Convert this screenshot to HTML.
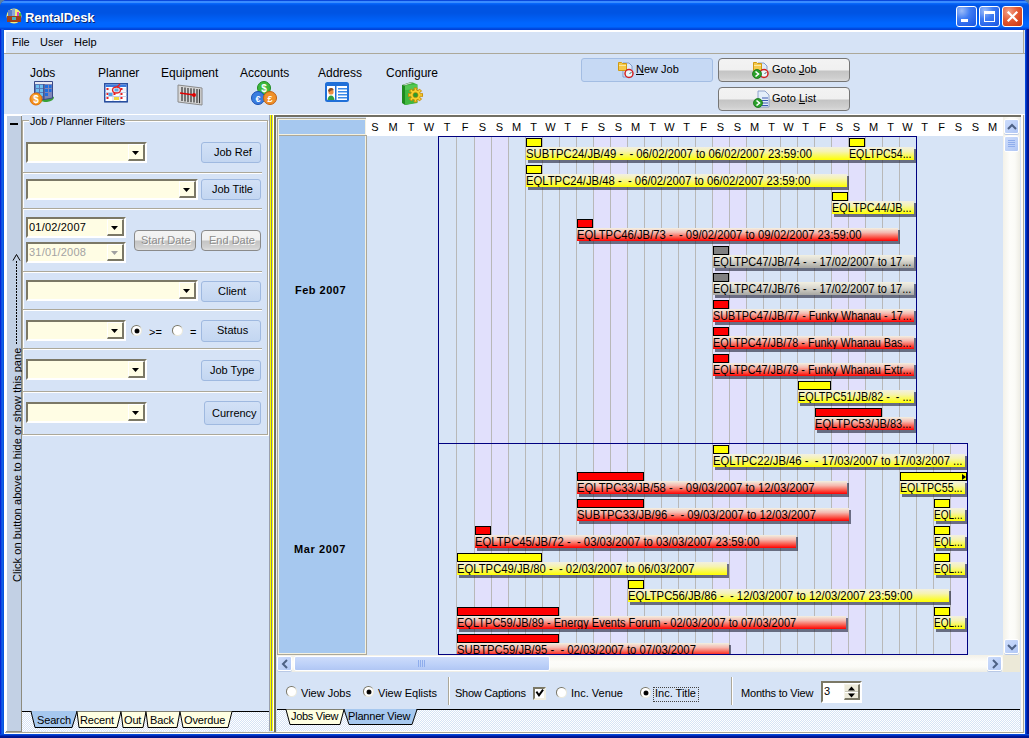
<!DOCTYPE html><html><head><meta charset="utf-8"><style>
*{margin:0;padding:0;box-sizing:border-box}
html,body{width:1029px;height:738px;overflow:hidden;background:#5b7fa0}
body{position:relative;font-family:"Liberation Sans",sans-serif;font-size:11px;color:#000}
.a{position:absolute}
.t{position:absolute;white-space:nowrap}
svg{position:absolute;overflow:visible}
</style></head><body>
<div class="a" style="left:0;top:0;width:1029px;height:738px;background:#0831d9;border-radius:7px 7px 0 0"></div>
<div class="a" style="left:0;top:0;width:1029px;height:30px;border-radius:7px 7px 0 0;background:linear-gradient(180deg,#0a48dc 0px,#0a48dc 1px,#3a8cff 1px,#3a8cff 3px,#0a6cff 3px,#0058ec 5px,#0054e3 6px,#0054e3 13px,#0060f6 20px,#0066ff 23px,#0066ff 27px,#0050e4 28px,#003dd7 30px)"></div>
<div class="a" style="left:0;top:29px;width:4px;height:709px;background:linear-gradient(90deg,#0019cf 0,#0831d9 1px,#166aee 2px,#0855dd 3px,#0855dd 4px)"></div>
<div class="a" style="left:1025px;top:29px;width:4px;height:709px;background:linear-gradient(90deg,#0855dd 0,#003bda 1px,#001ea0 2px,#00138c 3px,#00138c 4px)"></div>
<div class="a" style="left:0;top:734px;width:1029px;height:4px;background:linear-gradient(180deg,#0855dd 0,#003bda 1px,#001ea0 2px,#00138c 3px,#00138c 4px)"></div>
<div class="t" style="left:25px;top:11px;font-size:13px;line-height:13px;font-weight:bold;color:#fff;letter-spacing:-0.15px;text-shadow:1px 1px 0 #0a246a">RentalDesk</div>
<svg style="left:6px;top:8px" width="16" height="16" viewBox="0 0 16 16">
<circle cx="8" cy="8" r="7.5" fill="#f2ee7a"/>
<rect x="2" y="2" width="4" height="7" fill="#5a7fc8"/><rect x="6" y="1" width="3" height="8" fill="#8aa7d8"/>
<rect x="1" y="8" width="14" height="6" fill="#a0401a"/><rect x="6" y="9" width="4" height="3" fill="#4ab0c0"/>
<rect x="11" y="4" width="2" height="4" fill="#e040c0"/><rect x="13" y="5" width="2" height="3" fill="#40c040"/>
</svg>
<div class="a" style="left:956px;top:6px;width:21px;height:21px;border:1px solid #fff;border-radius:3px;background:radial-gradient(circle at 25% 20%,#9cbcf8 0,#3f7cf3 40%,#2663ea 75%,#1b55dc 100%)"></div>
<div class="a" style="left:979px;top:6px;width:21px;height:21px;border:1px solid #fff;border-radius:3px;background:radial-gradient(circle at 25% 20%,#9cbcf8 0,#3f7cf3 40%,#2663ea 75%,#1b55dc 100%)"></div>
<div class="a" style="left:1002px;top:6px;width:21px;height:21px;border:1px solid #fff;border-radius:3px;background:radial-gradient(circle at 30% 25%,#f3a28a 0,#e45a34 45%,#d2401c 80%,#c23a17 100%)"></div>
<div class="a" style="left:961px;top:19px;width:7px;height:3px;background:#fff"></div>
<div class="a" style="left:984px;top:11px;width:11px;height:11px;border:1px solid #fff;border-top-width:3px"></div>
<svg style="left:1002px;top:6px" width="21" height="21" viewBox="0 0 21 21"><path d="M6.5 6.5 L14.5 14.5 M14.5 6.5 L6.5 14.5" stroke="#fff" stroke-width="2.2" stroke-linecap="square"/></svg>
<div class="a" style="left:4px;top:30px;width:1021px;height:704px;background:#d6e3f6"></div>
<div class="a" style="left:4px;top:30px;width:1020px;height:2px;background:#fff"></div>
<div class="a" style="left:4px;top:30px;width:2px;height:23px;background:#fff"></div>
<div class="a" style="left:1023px;top:30px;width:1px;height:24px;background:#aca899"></div>
<div class="a" style="left:4px;top:53px;width:1021px;height:1px;background:#aca899"></div>
<div class="t" style="left:12px;top:37px;font-size:11px;line-height:11px;">File</div>
<div class="t" style="left:40px;top:37px;font-size:11px;line-height:11px;">User</div>
<div class="t" style="left:74px;top:37px;font-size:11px;line-height:11px;">Help</div>
<div class="a" style="left:4px;top:114px;width:1021px;height:1px;background:#fff"></div>
<div class="t" style="left:30px;top:67px;font-size:12px;line-height:12px;color:#000">Jobs</div>
<div class="t" style="left:98px;top:67px;font-size:12px;line-height:12px;color:#000">Planner</div>
<div class="t" style="left:161px;top:67px;font-size:12px;line-height:12px;color:#000">Equipment</div>
<div class="t" style="left:240px;top:67px;font-size:12px;line-height:12px;color:#000">Accounts</div>
<div class="t" style="left:318px;top:67px;font-size:12px;line-height:12px;color:#000">Address</div>
<div class="t" style="left:386px;top:67px;font-size:12px;line-height:12px;color:#000">Configure</div>
<svg style="left:30px;top:80px" width="26" height="26" viewBox="0 0 26 26">
<path d="M10 17 Q18 14 24 17 Q24 21 17 22 Q12 22 10 20 Z" fill="#38a038"/>
<path d="M4.5 1.5 H13.5 L14 2 V19.5 H4.5 Z" fill="#5a7ab8" stroke="#3a4a88" stroke-width="1"/>
<path d="M14 1.5 H22.5 V18 L14 19.5 Z" fill="#7f86b8" stroke="#3a4a88" stroke-width="1"/>
<rect x="5" y="2" width="17" height="2" fill="#e8e8f0"/>
<g fill="#6ec0f0"><rect x="6" y="5" width="3" height="3"/><rect x="10" y="5" width="3" height="3"/><rect x="6" y="9" width="3" height="3"/><rect x="10" y="9" width="3" height="3"/><rect x="6" y="13" width="3" height="3"/><rect x="10" y="13" width="3" height="3"/></g>
<g fill="#1e6ee0"><rect x="15" y="5" width="3" height="3"/><rect x="19" y="5" width="2.5" height="3"/><rect x="15" y="9" width="3" height="3"/><rect x="19" y="9" width="2.5" height="3"/><rect x="15" y="13" width="3" height="3"/></g>
<circle cx="6" cy="19" r="6" fill="#f39018"/><circle cx="6" cy="19" r="6" fill="none" stroke="#e07008" stroke-width="1"/>
<circle cx="5" cy="17.5" r="3.5" fill="#f8b048" opacity=".6"/>
<text x="6" y="23" font-size="10" font-weight="bold" fill="#fff" text-anchor="middle" font-family="Liberation Sans">$</text>
</svg>
<svg style="left:104px;top:83px" width="25" height="20" viewBox="0 0 25 20">
<rect x="0.75" y="0.75" width="22.5" height="18" fill="#fff" stroke="#2a50a0" stroke-width="1.5"/>
<rect x="1.5" y="1.5" width="21" height="2.5" fill="#3a7ae0"/>
<g fill="#ecf0f8"><rect x="2.5" y="5" width="6" height="3.5"/><rect x="9.5" y="5" width="6" height="3.5"/><rect x="16.5" y="5" width="5.5" height="3.5"/></g>
<g fill="#c8d0e8"><rect x="1.5" y="9" width="21" height="1"/><rect x="1.5" y="13" width="21" height="1"/><rect x="8.5" y="4" width="1" height="14"/><rect x="15.5" y="4" width="1" height="14"/></g>
<g fill="#e82020"><rect x="2.5" y="5" width="2" height="2"/><rect x="2.5" y="10" width="2" height="2"/><rect x="2.5" y="14" width="2" height="2"/><rect x="16.5" y="5" width="2" height="2"/><rect x="16.5" y="10" width="2" height="2"/><rect x="16.5" y="14" width="2" height="2"/><rect x="9.5" y="10" width="2" height="2"/></g>
<rect x="4.5" y="10" width="4" height="3" fill="#50a0e8"/><rect x="10" y="14" width="5" height="3" fill="#f0d840"/><rect x="10.5" y="5.5" width="4" height="3" fill="#60a8e8"/>
<ellipse cx="12.5" cy="7" rx="4" ry="3" fill="none" stroke="#e82020" stroke-width="1.3"/><path d="M13 4 L16 1" stroke="#e82020" stroke-width="1.2"/>
<rect x="0.75" y="18.2" width="22.5" height="1" fill="#2a50a0"/>
</svg>
<svg style="left:177px;top:82px" width="26" height="24" viewBox="0 0 26 24">
<path d="M1 3 L25 6 L25 23 L1 20 Z" fill="#d8d8d8" stroke="#8a8a8a"/>
<g stroke="#333" stroke-width="1.2"><path d="M5 5 V19 M8 5.5 V19.5 M11 6 V20 M14 6.3 V20.3 M17 6.6 V20.6 M20 7 V21 M22.5 7.3 V21.3"/></g>
<path d="M3 11 L17 13" stroke="#e00000" stroke-width="1.3"/><circle cx="17" cy="13" r="2" fill="#e00000"/>
</svg>
<svg style="left:251px;top:81px" width="26" height="25" viewBox="0 0 26 25">
<circle cx="13" cy="7" r="6.5" fill="#3db83d" stroke="#208a20"/>
<circle cx="7" cy="17" r="6.5" fill="#3a7de0" stroke="#1a50b0"/>
<circle cx="19" cy="17" r="6.5" fill="#f0902a" stroke="#c06010"/>
<text x="13" y="11" font-size="10" font-weight="bold" fill="#fff" text-anchor="middle" font-family="Liberation Sans">$</text>
<text x="7" y="21" font-size="9" font-weight="bold" fill="#fff" text-anchor="middle" font-family="Liberation Sans">€</text>
<text x="19" y="21" font-size="9" font-weight="bold" fill="#fff" text-anchor="middle" font-family="Liberation Sans">£</text>
</svg>
<svg style="left:325px;top:82px" width="25" height="20" viewBox="0 0 25 20">
<rect x="1" y="1" width="22" height="18" rx="1.5" fill="#fff" stroke="#1f6fd8" stroke-width="2"/>
<rect x="1" y="1" width="22" height="3" fill="#1f6fd8"/>
<rect x="10" y="4" width="1.5" height="14" fill="#1f6fd8"/>
<circle cx="6" cy="10" r="2.6" fill="#f09040"/><path d="M3 9 Q3.5 5.5 6.5 6 Q9 6.5 8.5 8.5 Q6 7.5 4.5 10 Z" fill="#8a4a20"/>
<path d="M2.5 18 Q3 13.5 6 13.5 Q9 13.5 9.5 18 Z" fill="#30a040"/>
<g fill="#3a8ae8"><rect x="13" y="6" width="9" height="1.5"/><rect x="13" y="9" width="9" height="1.5"/><rect x="13" y="12" width="9" height="1.5"/><rect x="13" y="15" width="9" height="1.5"/></g>
</svg>
<svg style="left:401px;top:81px" width="24" height="25" viewBox="0 0 24 25">
<path d="M1 4 L10 1 L13 2 L13 22 L4 24 L1 22 Z" fill="#1e8a1e"/>
<path d="M1.5 4 L10 1.2 L12.5 2 L4 4.5 Z" fill="#c8d0c8"/>
<path d="M4 4.5 L13 2 L16.5 3.5 L16.5 22 L4 24 Z" fill="#40b840"/>
<path d="M4 4.5 L16.5 3.5 L16.5 8 L4 9 Z" fill="#60d060" opacity=".6"/>
<g transform="translate(14.5,14)"><path d="M7.03 -1.57 L7.03 1.57 L4.89 1.06 L4.20 2.71 L6.08 3.86 L3.86 6.08 L2.71 4.20 L1.06 4.89 L1.57 7.03 L-1.57 7.03 L-1.06 4.89 L-2.71 4.20 L-3.86 6.08 L-6.08 3.86 L-4.20 2.71 L-4.89 1.06 L-7.03 1.57 L-7.03 -1.57 L-4.89 -1.06 L-4.20 -2.71 L-6.08 -3.86 L-3.86 -6.08 L-2.71 -4.20 L-1.06 -4.89 L-1.57 -7.03 L1.57 -7.03 L1.06 -4.89 L2.71 -4.20 L3.86 -6.08 L6.08 -3.86 L4.20 -2.71 L4.89 -1.06 Z" fill="#f8d030" stroke="#c88a00" stroke-width="0.9"/><circle r="2.6" fill="#2e9a2e" stroke="#c88a00" stroke-width="0.6"/></g>
</svg>
<div class="a" style="left:581px;top:58px;width:132px;height:24px;border:1px solid #a3bde3;border-radius:3px;background:#c6d9f4"></div>
<svg style="left:617px;top:61px" width="18" height="18" viewBox="0 0 18 18"><path d="M6 2 H12 L15 5 V16 H6 Z" fill="#dfeaf8" stroke="#6a8ac0" stroke-width="0.8"/><path d="M1.5 1.5 H4.5 L5.5 2.5 H9.5 V9.5 H1.5 Z" fill="#f6c84a" stroke="#d09a10" stroke-width="1"/><rect x="2" y="4" width="7" height="1" fill="#fbe9a0"/><circle cx="12" cy="12.5" r="4" fill="#e8f8fc" stroke="#d42020" stroke-width="1.5"/><path d="M12.5 13 L14.5 11" stroke="#555" stroke-width="1"/></svg>
<div class="t" style="left:636px;top:64px;font-size:11px;line-height:11px;"><u>N</u>ew Job</div>
<div class="a" style="left:718px;top:58px;width:132px;height:24px;border:1px solid #767676;border-radius:4px;background:linear-gradient(180deg,#f3f3f3 0,#f0f0f0 11px,#c4c4c4 12px,#cfcfcf 19px,#dedede 23px)"></div>
<svg style="left:752px;top:61px" width="18" height="18" viewBox="0 0 18 18"><path d="M6 2 H12 L15 5 V16 H6 Z" fill="#dfeaf8" stroke="#6a8ac0" stroke-width="0.8"/><path d="M1.5 1.5 H4.5 L5.5 2.5 H9.5 V9.5 H1.5 Z" fill="#f6c84a" stroke="#d09a10" stroke-width="1"/><rect x="2" y="4" width="7" height="1" fill="#fbe9a0"/><circle cx="12" cy="12.5" r="4" fill="#e8f8fc" stroke="#d42020" stroke-width="1.5"/><path d="M12.5 13 L14.5 11" stroke="#555" stroke-width="1"/><circle cx="5" cy="13" r="4.5" fill="#2aa02a" stroke="#167016" stroke-width="0.8"/><path d="M3.5 10.5 L6.5 13 L3.5 15.5" stroke="#fff" stroke-width="1.6" fill="none"/></svg>
<div class="t" style="left:772px;top:64px;font-size:11px;line-height:11px;">Goto <u>J</u>ob</div>
<div class="a" style="left:718px;top:87px;width:132px;height:24px;border:1px solid #767676;border-radius:4px;background:linear-gradient(180deg,#f3f3f3 0,#f0f0f0 11px,#c4c4c4 12px,#cfcfcf 19px,#dedede 23px)"></div>
<svg style="left:753px;top:90px" width="18" height="18" viewBox="0 0 18 18">
<path d="M5 1 H12 L16 5 V17 H5 Z" fill="#e4eefa" stroke="#7a90c0" stroke-width="0.8"/>
<g stroke="#3a58b0" stroke-width="1"><path d="M9 8 H15 M9 10.5 H15 M9 13 H15 M9 15.5 H15"/></g>
<circle cx="5" cy="13" r="4.5" fill="#2aa02a" stroke="#167016" stroke-width="0.8"/><path d="M3.5 10.5 L6.5 13 L3.5 15.5" stroke="#fff" stroke-width="1.6" fill="none"/></svg>
<div class="t" style="left:772px;top:93px;font-size:11px;line-height:11px;">Goto <u>L</u>ist</div>
<div class="a" style="left:4px;top:114px;width:3px;height:620px;background:#fff"></div>
<div class="a" style="left:4px;top:114px;width:270px;height:1px;background:#fff"></div>
<div class="a" style="left:4px;top:115px;width:18px;height:1px;background:#fff"></div>
<div class="a" style="left:7px;top:116px;width:14px;height:616px;background:#c2d0e4"></div>
<div class="a" style="left:21px;top:116px;width:1px;height:616px;background:#8d8b7e"></div>
<div class="a" style="left:10px;top:123px;width:8px;height:2px;background:#000"></div>
<div class="t" style="left:12px;top:582px;font-size:11px;line-height:11px;letter-spacing:0.07px;transform-origin:0 0;transform:rotate(-90deg)">Click on button above to hide or show this pane</div>
<svg style="left:0;top:250px" width="22" height="100" viewBox="0 0 22 100"><path d="M16.5 94 V10" stroke="#000" stroke-width="1" stroke-dasharray="2 1"/><path d="M13 10.5 L16.5 4.5 L20 10.5" stroke="#000" stroke-width="1" fill="none"/></svg>
<div class="a" style="left:22px;top:120px;width:246px;height:315px;border:1px solid #aca899;box-shadow:inset 1px 1px 0 #fff, 1px 1px 0 #fff"></div>
<div class="a" style="left:29px;top:115px;width:96px;height:11px;background:#d6e3f6"></div>
<div class="t" style="left:30px;top:116px;font-size:10.7px;line-height:10.7px;">Job / Planner Filters</div>
<div class="a" style="left:26px;top:142px;width:121px;height:21px;background:#fffde4;border-top:2px solid #7b7866;border-left:2px solid #7b7866;border-right:2px solid #fff;border-bottom:2px solid #fff"></div>
<div class="a" style="left:128px;top:144px;width:17px;height:17px;background:#fffde4;border-top:1px solid #fff;border-left:1px solid #fff;border-right:2px solid #7b7866;border-bottom:2px solid #7b7866"></div>
<svg style="left:132px;top:151px" width="8" height="5" viewBox="0 0 8 5"><path d="M0 0 H7 L3.5 4 Z" fill="#000"/></svg>
<div class="a" style="left:201px;top:142px;width:60px;height:21px;border:1px solid #9fb9e0;border-radius:3px;background:linear-gradient(180deg,#d2e1f6,#c3d6f1)"></div>
<div class="t" style="left:214px;top:147px;font-size:11px;line-height:11px;">Job Ref</div>
<div class="a" style="left:23px;top:172px;width:239px;height:1px;background:#aca899"></div>
<div class="a" style="left:23px;top:173px;width:239px;height:1px;background:#fff"></div>
<div class="a" style="left:26px;top:179px;width:172px;height:21px;background:#fffde4;border-top:2px solid #7b7866;border-left:2px solid #7b7866;border-right:2px solid #fff;border-bottom:2px solid #fff"></div>
<div class="a" style="left:179px;top:181px;width:17px;height:17px;background:#fffde4;border-top:1px solid #fff;border-left:1px solid #fff;border-right:2px solid #7b7866;border-bottom:2px solid #7b7866"></div>
<svg style="left:183px;top:188px" width="8" height="5" viewBox="0 0 8 5"><path d="M0 0 H7 L3.5 4 Z" fill="#000"/></svg>
<div class="a" style="left:201px;top:179px;width:60px;height:21px;border:1px solid #9fb9e0;border-radius:3px;background:linear-gradient(180deg,#d2e1f6,#c3d6f1)"></div>
<div class="t" style="left:212px;top:184px;font-size:11px;line-height:11px;">Job Title</div>
<div class="a" style="left:23px;top:208px;width:239px;height:1px;background:#aca899"></div>
<div class="a" style="left:23px;top:209px;width:239px;height:1px;background:#fff"></div>
<div class="a" style="left:26px;top:217px;width:100px;height:21px;background:#fffde4;border-top:2px solid #7b7866;border-left:2px solid #7b7866;border-right:2px solid #fff;border-bottom:2px solid #fff"></div>
<div class="a" style="left:107px;top:219px;width:17px;height:17px;background:#fffde4;border-top:1px solid #fff;border-left:1px solid #fff;border-right:2px solid #7b7866;border-bottom:2px solid #7b7866"></div>
<svg style="left:111px;top:226px" width="8" height="5" viewBox="0 0 8 5"><path d="M0 0 H7 L3.5 4 Z" fill="#000"/></svg>
<div class="t" style="left:29px;top:222px;font-size:11px;line-height:11px;color:#000;letter-spacing:0.2px">01/02/2007</div>
<div class="a" style="left:26px;top:242px;width:100px;height:21px;background:#fffde4;border-top:2px solid #7b7866;border-left:2px solid #7b7866;border-right:2px solid #fff;border-bottom:2px solid #fff"></div>
<div class="a" style="left:107px;top:244px;width:17px;height:17px;background:#fffde4;border-top:1px solid #fff;border-left:1px solid #fff;border-right:2px solid #7b7866;border-bottom:2px solid #7b7866"></div>
<svg style="left:111px;top:251px" width="8" height="5" viewBox="0 0 8 5"><path d="M0 0 H7 L3.5 4 Z" fill="#a0a0a0"/></svg>
<div class="t" style="left:29px;top:247px;font-size:11px;line-height:11px;color:#a3a3a3;letter-spacing:0.2px">31/01/2008</div>
<div class="a" style="left:134px;top:230px;width:62px;height:21px;border:1px solid #8a8a8a;border-radius:4px;background:linear-gradient(180deg,#f3f3f3 0,#f0f0f0 9px,#c4c4c4 10px,#d0d0d0 16px,#dedede 19px)"></div>
<div class="t" style="left:141px;top:235px;font-size:11px;line-height:11px;color:#8d8d8d;text-shadow:1px 1px 0 #fff">Start Date</div>
<div class="a" style="left:201px;top:230px;width:60px;height:21px;border:1px solid #8a8a8a;border-radius:4px;background:linear-gradient(180deg,#f3f3f3 0,#f0f0f0 9px,#c4c4c4 10px,#d0d0d0 16px,#dedede 19px)"></div>
<div class="t" style="left:209px;top:235px;font-size:11px;line-height:11px;color:#8d8d8d;text-shadow:1px 1px 0 #fff">End Date</div>
<div class="a" style="left:23px;top:271px;width:239px;height:1px;background:#aca899"></div>
<div class="a" style="left:23px;top:272px;width:239px;height:1px;background:#fff"></div>
<div class="a" style="left:26px;top:280px;width:172px;height:21px;background:#fffde4;border-top:2px solid #7b7866;border-left:2px solid #7b7866;border-right:2px solid #fff;border-bottom:2px solid #fff"></div>
<div class="a" style="left:179px;top:282px;width:17px;height:17px;background:#fffde4;border-top:1px solid #fff;border-left:1px solid #fff;border-right:2px solid #7b7866;border-bottom:2px solid #7b7866"></div>
<svg style="left:183px;top:289px" width="8" height="5" viewBox="0 0 8 5"><path d="M0 0 H7 L3.5 4 Z" fill="#000"/></svg>
<div class="a" style="left:201px;top:281px;width:60px;height:21px;border:1px solid #9fb9e0;border-radius:3px;background:linear-gradient(180deg,#d2e1f6,#c3d6f1)"></div>
<div class="t" style="left:218px;top:286px;font-size:11px;line-height:11px;">Client</div>
<div class="a" style="left:23px;top:309px;width:239px;height:1px;background:#aca899"></div>
<div class="a" style="left:23px;top:310px;width:239px;height:1px;background:#fff"></div>
<div class="a" style="left:26px;top:320px;width:100px;height:21px;background:#fffde4;border-top:2px solid #7b7866;border-left:2px solid #7b7866;border-right:2px solid #fff;border-bottom:2px solid #fff"></div>
<div class="a" style="left:107px;top:322px;width:17px;height:17px;background:#fffde4;border-top:1px solid #fff;border-left:1px solid #fff;border-right:2px solid #7b7866;border-bottom:2px solid #7b7866"></div>
<svg style="left:111px;top:329px" width="8" height="5" viewBox="0 0 8 5"><path d="M0 0 H7 L3.5 4 Z" fill="#000"/></svg>
<div class="a" style="left:131px;top:325px;width:11px;height:11px;border-radius:50%;background:linear-gradient(135deg,#6f6c5c 0,#7a7766 38%,#e8e6d8 62%,#f4f2e6 100%)"></div>
<div class="a" style="left:132.25px;top:326.25px;width:8.5px;height:8.5px;border-radius:50%;background:#fff"></div>
<div class="a" style="left:134.5px;top:328.5px;width:4px;height:4px;border-radius:50%;background:#000;box-shadow:0 0 0 .5px #222"></div>
<div class="t" style="left:149px;top:327px;font-size:11px;line-height:11px;">&gt;=</div>
<div class="a" style="left:172px;top:325px;width:11px;height:11px;border-radius:50%;background:linear-gradient(135deg,#6f6c5c 0,#7a7766 38%,#e8e6d8 62%,#f4f2e6 100%)"></div>
<div class="a" style="left:173.25px;top:326.25px;width:8.5px;height:8.5px;border-radius:50%;background:#fff"></div>
<div class="t" style="left:190px;top:327px;font-size:11px;line-height:11px;">=</div>
<div class="a" style="left:201px;top:320px;width:60px;height:22px;border:1px solid #9fb9e0;border-radius:3px;background:linear-gradient(180deg,#d2e1f6,#c3d6f1)"></div>
<div class="t" style="left:217px;top:325px;font-size:11px;line-height:11px;">Status</div>
<div class="a" style="left:23px;top:348px;width:239px;height:1px;background:#aca899"></div>
<div class="a" style="left:23px;top:349px;width:239px;height:1px;background:#fff"></div>
<div class="a" style="left:26px;top:359px;width:121px;height:21px;background:#fffde4;border-top:2px solid #7b7866;border-left:2px solid #7b7866;border-right:2px solid #fff;border-bottom:2px solid #fff"></div>
<div class="a" style="left:128px;top:361px;width:17px;height:17px;background:#fffde4;border-top:1px solid #fff;border-left:1px solid #fff;border-right:2px solid #7b7866;border-bottom:2px solid #7b7866"></div>
<svg style="left:132px;top:368px" width="8" height="5" viewBox="0 0 8 5"><path d="M0 0 H7 L3.5 4 Z" fill="#000"/></svg>
<div class="a" style="left:201px;top:360px;width:60px;height:21px;border:1px solid #9fb9e0;border-radius:3px;background:linear-gradient(180deg,#d2e1f6,#c3d6f1)"></div>
<div class="t" style="left:210px;top:365px;font-size:11px;line-height:11px;">Job Type</div>
<div class="a" style="left:23px;top:391px;width:239px;height:1px;background:#aca899"></div>
<div class="a" style="left:23px;top:392px;width:239px;height:1px;background:#fff"></div>
<div class="a" style="left:26px;top:402px;width:121px;height:21px;background:#fffde4;border-top:2px solid #7b7866;border-left:2px solid #7b7866;border-right:2px solid #fff;border-bottom:2px solid #fff"></div>
<div class="a" style="left:128px;top:404px;width:17px;height:17px;background:#fffde4;border-top:1px solid #fff;border-left:1px solid #fff;border-right:2px solid #7b7866;border-bottom:2px solid #7b7866"></div>
<svg style="left:132px;top:411px" width="8" height="5" viewBox="0 0 8 5"><path d="M0 0 H7 L3.5 4 Z" fill="#000"/></svg>
<div class="a" style="left:204px;top:401px;width:57px;height:24px;border:1px solid #9fb9e0;border-radius:3px;background:linear-gradient(180deg,#d2e1f6,#c3d6f1)"></div>
<div class="t" style="left:212px;top:408px;font-size:11px;line-height:11px;">Currency</div>
<div class="a" style="left:22px;top:711px;width:247px;height:21px;background:repeating-linear-gradient(45deg,#e3eaf5 0,#e3eaf5 1px,#f3f6fb 1px,#f3f6fb 2px)"></div>
<div class="a" style="left:22px;top:711px;width:247px;height:1px;background:#000"></div>
<div class="a" style="left:274px;top:115px;width:749px;height:2px;background:#716f64"></div>
<div class="a" style="left:274px;top:115px;width:2px;height:619px;background:#716f64"></div>
<div class="a" style="left:276px;top:117px;width:749px;height:1px;background:#e8eef8"></div>
<div class="a" style="left:276px;top:117px;width:1px;height:540px;background:#e8eef8"></div>
<div class="a" style="left:277px;top:117px;width:748px;height:540px;background:#d7e4f6"></div>
<div class="a" style="left:366px;top:117px;width:638px;height:19px;background:#fff"></div>
<div class="t" style="left:366px;width:18px;text-align:center;top:122px;font-size:11px;line-height:11px">S</div>
<div class="t" style="left:384px;width:18px;text-align:center;top:122px;font-size:11px;line-height:11px">M</div>
<div class="t" style="left:402px;width:18px;text-align:center;top:122px;font-size:11px;line-height:11px">T</div>
<div class="t" style="left:420px;width:18px;text-align:center;top:122px;font-size:11px;line-height:11px">W</div>
<div class="t" style="left:438px;width:18px;text-align:center;top:122px;font-size:11px;line-height:11px">T</div>
<div class="t" style="left:456px;width:18px;text-align:center;top:122px;font-size:11px;line-height:11px">F</div>
<div class="t" style="left:474px;width:17px;text-align:center;top:122px;font-size:11px;line-height:11px">S</div>
<div class="t" style="left:491px;width:17px;text-align:center;top:122px;font-size:11px;line-height:11px">S</div>
<div class="t" style="left:508px;width:17px;text-align:center;top:122px;font-size:11px;line-height:11px">M</div>
<div class="t" style="left:525px;width:17px;text-align:center;top:122px;font-size:11px;line-height:11px">T</div>
<div class="t" style="left:542px;width:17px;text-align:center;top:122px;font-size:11px;line-height:11px">W</div>
<div class="t" style="left:559px;width:17px;text-align:center;top:122px;font-size:11px;line-height:11px">T</div>
<div class="t" style="left:576px;width:17px;text-align:center;top:122px;font-size:11px;line-height:11px">F</div>
<div class="t" style="left:593px;width:17px;text-align:center;top:122px;font-size:11px;line-height:11px">S</div>
<div class="t" style="left:610px;width:17px;text-align:center;top:122px;font-size:11px;line-height:11px">S</div>
<div class="t" style="left:627px;width:17px;text-align:center;top:122px;font-size:11px;line-height:11px">M</div>
<div class="t" style="left:644px;width:17px;text-align:center;top:122px;font-size:11px;line-height:11px">T</div>
<div class="t" style="left:661px;width:17px;text-align:center;top:122px;font-size:11px;line-height:11px">W</div>
<div class="t" style="left:678px;width:17px;text-align:center;top:122px;font-size:11px;line-height:11px">T</div>
<div class="t" style="left:695px;width:17px;text-align:center;top:122px;font-size:11px;line-height:11px">F</div>
<div class="t" style="left:712px;width:17px;text-align:center;top:122px;font-size:11px;line-height:11px">S</div>
<div class="t" style="left:729px;width:17px;text-align:center;top:122px;font-size:11px;line-height:11px">S</div>
<div class="t" style="left:746px;width:17px;text-align:center;top:122px;font-size:11px;line-height:11px">M</div>
<div class="t" style="left:763px;width:17px;text-align:center;top:122px;font-size:11px;line-height:11px">T</div>
<div class="t" style="left:780px;width:17px;text-align:center;top:122px;font-size:11px;line-height:11px">W</div>
<div class="t" style="left:797px;width:17px;text-align:center;top:122px;font-size:11px;line-height:11px">T</div>
<div class="t" style="left:814px;width:17px;text-align:center;top:122px;font-size:11px;line-height:11px">F</div>
<div class="t" style="left:831px;width:17px;text-align:center;top:122px;font-size:11px;line-height:11px">S</div>
<div class="t" style="left:848px;width:17px;text-align:center;top:122px;font-size:11px;line-height:11px">S</div>
<div class="t" style="left:865px;width:17px;text-align:center;top:122px;font-size:11px;line-height:11px">M</div>
<div class="t" style="left:882px;width:17px;text-align:center;top:122px;font-size:11px;line-height:11px">T</div>
<div class="t" style="left:899px;width:17px;text-align:center;top:122px;font-size:11px;line-height:11px">W</div>
<div class="t" style="left:916px;width:17px;text-align:center;top:122px;font-size:11px;line-height:11px">T</div>
<div class="t" style="left:933px;width:17px;text-align:center;top:122px;font-size:11px;line-height:11px">F</div>
<div class="t" style="left:950px;width:17px;text-align:center;top:122px;font-size:11px;line-height:11px">S</div>
<div class="t" style="left:967px;width:17px;text-align:center;top:122px;font-size:11px;line-height:11px">S</div>
<div class="t" style="left:984px;width:17px;text-align:center;top:122px;font-size:11px;line-height:11px">M</div>
<div class="a" style="left:277px;top:118px;width:90px;height:537px;background:#aca899"></div>
<div class="a" style="left:278px;top:119px;width:88px;height:535px;background:#f4f1e0"></div>
<div class="a" style="left:279px;top:120px;width:86px;height:533px;background:#a6c8ef"></div>
<div class="a" style="left:279px;top:134px;width:86px;height:1px;background:#f4f1e0"></div>
<div class="a" style="left:279px;top:135px;width:87px;height:1px;background:#aca899"></div>
<div class="a" style="left:366px;top:117px;width:1px;height:18px;background:#fff"></div>
<div class="t" style="left:295px;top:285px;font-size:11px;line-height:11px;font-weight:bold;letter-spacing:0.5px">Feb 2007</div>
<div class="t" style="left:294px;top:544px;font-size:11px;line-height:11px;font-weight:bold;letter-spacing:0.6px">Mar 2007</div>
<div class="a" style="left:438px;top:136px;width:478px;height:307px;background:#d7e4f6"></div>
<div class="a" style="left:474px;top:136px;width:17px;height:307px;background:#e1e0fc"></div>
<div class="a" style="left:491px;top:136px;width:17px;height:307px;background:#e1e0fc"></div>
<div class="a" style="left:593px;top:136px;width:17px;height:307px;background:#e1e0fc"></div>
<div class="a" style="left:610px;top:136px;width:17px;height:307px;background:#e1e0fc"></div>
<div class="a" style="left:712px;top:136px;width:17px;height:307px;background:#e1e0fc"></div>
<div class="a" style="left:729px;top:136px;width:17px;height:307px;background:#e1e0fc"></div>
<div class="a" style="left:831px;top:136px;width:17px;height:307px;background:#e1e0fc"></div>
<div class="a" style="left:848px;top:136px;width:17px;height:307px;background:#e1e0fc"></div>
<div class="a" style="left:456px;top:136px;width:1px;height:307px;background:#b8b8b8"></div>
<div class="a" style="left:474px;top:136px;width:1px;height:307px;background:#b8b8b8"></div>
<div class="a" style="left:491px;top:136px;width:1px;height:307px;background:#b8b8b8"></div>
<div class="a" style="left:508px;top:136px;width:1px;height:307px;background:#b8b8b8"></div>
<div class="a" style="left:525px;top:136px;width:1px;height:307px;background:#b8b8b8"></div>
<div class="a" style="left:542px;top:136px;width:1px;height:307px;background:#b8b8b8"></div>
<div class="a" style="left:559px;top:136px;width:1px;height:307px;background:#b8b8b8"></div>
<div class="a" style="left:576px;top:136px;width:1px;height:307px;background:#b8b8b8"></div>
<div class="a" style="left:593px;top:136px;width:1px;height:307px;background:#b8b8b8"></div>
<div class="a" style="left:610px;top:136px;width:1px;height:307px;background:#b8b8b8"></div>
<div class="a" style="left:627px;top:136px;width:1px;height:307px;background:#b8b8b8"></div>
<div class="a" style="left:644px;top:136px;width:1px;height:307px;background:#b8b8b8"></div>
<div class="a" style="left:661px;top:136px;width:1px;height:307px;background:#b8b8b8"></div>
<div class="a" style="left:678px;top:136px;width:1px;height:307px;background:#b8b8b8"></div>
<div class="a" style="left:695px;top:136px;width:1px;height:307px;background:#b8b8b8"></div>
<div class="a" style="left:712px;top:136px;width:1px;height:307px;background:#b8b8b8"></div>
<div class="a" style="left:729px;top:136px;width:1px;height:307px;background:#b8b8b8"></div>
<div class="a" style="left:746px;top:136px;width:1px;height:307px;background:#b8b8b8"></div>
<div class="a" style="left:763px;top:136px;width:1px;height:307px;background:#b8b8b8"></div>
<div class="a" style="left:780px;top:136px;width:1px;height:307px;background:#b8b8b8"></div>
<div class="a" style="left:797px;top:136px;width:1px;height:307px;background:#b8b8b8"></div>
<div class="a" style="left:814px;top:136px;width:1px;height:307px;background:#b8b8b8"></div>
<div class="a" style="left:831px;top:136px;width:1px;height:307px;background:#b8b8b8"></div>
<div class="a" style="left:848px;top:136px;width:1px;height:307px;background:#b8b8b8"></div>
<div class="a" style="left:865px;top:136px;width:1px;height:307px;background:#b8b8b8"></div>
<div class="a" style="left:882px;top:136px;width:1px;height:307px;background:#b8b8b8"></div>
<div class="a" style="left:899px;top:136px;width:1px;height:307px;background:#b8b8b8"></div>
<div class="a" style="left:438px;top:443px;width:529px;height:212px;background:#d7e4f6"></div>
<div class="a" style="left:474px;top:443px;width:17px;height:212px;background:#e1e0fc"></div>
<div class="a" style="left:491px;top:443px;width:17px;height:212px;background:#e1e0fc"></div>
<div class="a" style="left:593px;top:443px;width:17px;height:212px;background:#e1e0fc"></div>
<div class="a" style="left:610px;top:443px;width:17px;height:212px;background:#e1e0fc"></div>
<div class="a" style="left:712px;top:443px;width:17px;height:212px;background:#e1e0fc"></div>
<div class="a" style="left:729px;top:443px;width:17px;height:212px;background:#e1e0fc"></div>
<div class="a" style="left:831px;top:443px;width:17px;height:212px;background:#e1e0fc"></div>
<div class="a" style="left:848px;top:443px;width:17px;height:212px;background:#e1e0fc"></div>
<div class="a" style="left:950px;top:443px;width:17px;height:212px;background:#e1e0fc"></div>
<div class="a" style="left:456px;top:443px;width:1px;height:212px;background:#b8b8b8"></div>
<div class="a" style="left:474px;top:443px;width:1px;height:212px;background:#b8b8b8"></div>
<div class="a" style="left:491px;top:443px;width:1px;height:212px;background:#b8b8b8"></div>
<div class="a" style="left:508px;top:443px;width:1px;height:212px;background:#b8b8b8"></div>
<div class="a" style="left:525px;top:443px;width:1px;height:212px;background:#b8b8b8"></div>
<div class="a" style="left:542px;top:443px;width:1px;height:212px;background:#b8b8b8"></div>
<div class="a" style="left:559px;top:443px;width:1px;height:212px;background:#b8b8b8"></div>
<div class="a" style="left:576px;top:443px;width:1px;height:212px;background:#b8b8b8"></div>
<div class="a" style="left:593px;top:443px;width:1px;height:212px;background:#b8b8b8"></div>
<div class="a" style="left:610px;top:443px;width:1px;height:212px;background:#b8b8b8"></div>
<div class="a" style="left:627px;top:443px;width:1px;height:212px;background:#b8b8b8"></div>
<div class="a" style="left:644px;top:443px;width:1px;height:212px;background:#b8b8b8"></div>
<div class="a" style="left:661px;top:443px;width:1px;height:212px;background:#b8b8b8"></div>
<div class="a" style="left:678px;top:443px;width:1px;height:212px;background:#b8b8b8"></div>
<div class="a" style="left:695px;top:443px;width:1px;height:212px;background:#b8b8b8"></div>
<div class="a" style="left:712px;top:443px;width:1px;height:212px;background:#b8b8b8"></div>
<div class="a" style="left:729px;top:443px;width:1px;height:212px;background:#b8b8b8"></div>
<div class="a" style="left:746px;top:443px;width:1px;height:212px;background:#b8b8b8"></div>
<div class="a" style="left:763px;top:443px;width:1px;height:212px;background:#b8b8b8"></div>
<div class="a" style="left:780px;top:443px;width:1px;height:212px;background:#b8b8b8"></div>
<div class="a" style="left:797px;top:443px;width:1px;height:212px;background:#b8b8b8"></div>
<div class="a" style="left:814px;top:443px;width:1px;height:212px;background:#b8b8b8"></div>
<div class="a" style="left:831px;top:443px;width:1px;height:212px;background:#b8b8b8"></div>
<div class="a" style="left:848px;top:443px;width:1px;height:212px;background:#b8b8b8"></div>
<div class="a" style="left:865px;top:443px;width:1px;height:212px;background:#b8b8b8"></div>
<div class="a" style="left:882px;top:443px;width:1px;height:212px;background:#b8b8b8"></div>
<div class="a" style="left:899px;top:443px;width:1px;height:212px;background:#b8b8b8"></div>
<div class="a" style="left:916px;top:443px;width:1px;height:212px;background:#b8b8b8"></div>
<div class="a" style="left:933px;top:443px;width:1px;height:212px;background:#b8b8b8"></div>
<div class="a" style="left:950px;top:443px;width:1px;height:212px;background:#b8b8b8"></div>
<div class="a" style="left:366px;top:136px;width:638px;height:307px;overflow:hidden">
<div class="a" style="left:162px;top:13px;width:323px;height:14px;background:rgba(28,30,52,.6)"></div>
<div class="a" style="left:160px;top:11px;width:323px;height:13px;background:linear-gradient(180deg,#f2f0e2 0,#f6f3b0 35%,#fafa50 70%,#ffff00 100%);overflow:hidden"><div class="t" style="left:0;top:1px;font-size:12px;line-height:12px;transform-origin:0 0;transform:scaleX(0.940)">SUBTPC24/JB/49 -&nbsp; - 06/02/2007 to 06/02/2007 23:59:00</div></div>
<div class="a" style="left:160px;top:2px;width:16px;height:9px;border:1px solid #000;background:#ffff00"></div>
<div class="a" style="left:485px;top:13px;width:65px;height:14px;background:rgba(28,30,52,.6)"></div>
<div class="a" style="left:483px;top:11px;width:65px;height:13px;background:linear-gradient(180deg,#f2f0e2 0,#f6f3b0 35%,#fafa50 70%,#ffff00 100%);overflow:hidden"><div class="t" style="left:0;top:1px;font-size:12px;line-height:12px;transform-origin:0 0;transform:scaleX(0.887)">EQLTPC54...</div></div>
<div class="a" style="left:483px;top:2px;width:16px;height:9px;border:1px solid #000;background:#ffff00"></div>
<div class="a" style="left:162px;top:40px;width:321px;height:14px;background:rgba(28,30,52,.6)"></div>
<div class="a" style="left:160px;top:38px;width:321px;height:13px;background:linear-gradient(180deg,#f2f0e2 0,#f6f3b0 35%,#fafa50 70%,#ffff00 100%);overflow:hidden"><div class="t" style="left:0;top:1px;font-size:12px;line-height:12px;transform-origin:0 0;transform:scaleX(0.940)">EQLTPC24/JB/48 -&nbsp; - 06/02/2007 to 06/02/2007 23:59:00</div></div>
<div class="a" style="left:160px;top:29px;width:16px;height:9px;border:1px solid #000;background:#ffff00"></div>
<div class="a" style="left:468px;top:67px;width:82px;height:14px;background:rgba(28,30,52,.6)"></div>
<div class="a" style="left:466px;top:65px;width:82px;height:13px;background:linear-gradient(180deg,#f2f0e2 0,#f6f3b0 35%,#fafa50 70%,#ffff00 100%);overflow:hidden"><div class="t" style="left:0;top:1px;font-size:12px;line-height:12px;transform-origin:0 0;transform:scaleX(0.905)">EQLTPC44/JB...</div></div>
<div class="a" style="left:466px;top:56px;width:16px;height:9px;border:1px solid #000;background:#ffff00"></div>
<div class="a" style="left:213px;top:94px;width:321px;height:14px;background:rgba(28,30,52,.6)"></div>
<div class="a" style="left:211px;top:92px;width:321px;height:13px;background:linear-gradient(180deg,#f2f0e2 0,#f5b8ae 35%,#fa5a4c 70%,#ff0000 100%);overflow:hidden"><div class="t" style="left:0;top:1px;font-size:12px;line-height:12px;transform-origin:0 0;transform:scaleX(0.940)">EQLTPC46/JB/73 -&nbsp; - 09/02/2007 to 09/02/2007 23:59:00</div></div>
<div class="a" style="left:211px;top:83px;width:16px;height:9px;border:1px solid #000;background:#ff0000"></div>
<div class="a" style="left:349px;top:121px;width:201px;height:14px;background:rgba(28,30,52,.6)"></div>
<div class="a" style="left:347px;top:119px;width:201px;height:13px;background:linear-gradient(180deg,#f2f0e2 0,#dddbd2 40%,#bcbbb4 75%,#a8a8a4 100%);overflow:hidden"><div class="t" style="left:0;top:1px;font-size:12px;line-height:12px;transform-origin:0 0;transform:scaleX(0.919)">EQLTPC47/JB/74 -&nbsp; - 17/02/2007 to 17...</div></div>
<div class="a" style="left:347px;top:110px;width:16px;height:9px;border:1px solid #000;background:#808080"></div>
<div class="a" style="left:349px;top:148px;width:201px;height:14px;background:rgba(28,30,52,.6)"></div>
<div class="a" style="left:347px;top:146px;width:201px;height:13px;background:linear-gradient(180deg,#f2f0e2 0,#dddbd2 40%,#bcbbb4 75%,#a8a8a4 100%);overflow:hidden"><div class="t" style="left:0;top:1px;font-size:12px;line-height:12px;transform-origin:0 0;transform:scaleX(0.919)">EQLTPC47/JB/76 -&nbsp; - 17/02/2007 to 17...</div></div>
<div class="a" style="left:347px;top:137px;width:16px;height:9px;border:1px solid #000;background:#808080"></div>
<div class="a" style="left:349px;top:175px;width:201px;height:14px;background:rgba(28,30,52,.6)"></div>
<div class="a" style="left:347px;top:173px;width:201px;height:13px;background:linear-gradient(180deg,#f2f0e2 0,#f5b8ae 35%,#fa5a4c 70%,#ff0000 100%);overflow:hidden"><div class="t" style="left:0;top:1px;font-size:12px;line-height:12px;transform-origin:0 0;transform:scaleX(0.897)">SUBTPC47/JB/77 - Funky Whanau - 17...</div></div>
<div class="a" style="left:347px;top:164px;width:16px;height:9px;border:1px solid #000;background:#ff0000"></div>
<div class="a" style="left:349px;top:202px;width:201px;height:14px;background:rgba(28,30,52,.6)"></div>
<div class="a" style="left:347px;top:200px;width:201px;height:13px;background:linear-gradient(180deg,#f2f0e2 0,#f5b8ae 35%,#fa5a4c 70%,#ff0000 100%);overflow:hidden"><div class="t" style="left:0;top:1px;font-size:12px;line-height:12px;transform-origin:0 0;transform:scaleX(0.903)">EQLTPC47/JB/78 - Funky Whanau Bas...</div></div>
<div class="a" style="left:347px;top:191px;width:16px;height:9px;border:1px solid #000;background:#ff0000"></div>
<div class="a" style="left:349px;top:229px;width:201px;height:14px;background:rgba(28,30,52,.6)"></div>
<div class="a" style="left:347px;top:227px;width:201px;height:13px;background:linear-gradient(180deg,#f2f0e2 0,#f5b8ae 35%,#fa5a4c 70%,#ff0000 100%);overflow:hidden"><div class="t" style="left:0;top:1px;font-size:12px;line-height:12px;transform-origin:0 0;transform:scaleX(0.903)">EQLTPC47/JB/79 - Funky Whanau Extr...</div></div>
<div class="a" style="left:347px;top:218px;width:16px;height:9px;border:1px solid #000;background:#ff0000"></div>
<div class="a" style="left:434px;top:256px;width:116px;height:14px;background:rgba(28,30,52,.6)"></div>
<div class="a" style="left:432px;top:254px;width:116px;height:13px;background:linear-gradient(180deg,#f2f0e2 0,#f6f3b0 35%,#fafa50 70%,#ffff00 100%);overflow:hidden"><div class="t" style="left:0;top:1px;font-size:12px;line-height:12px;transform-origin:0 0;transform:scaleX(0.902)">EQLTPC51/JB/82 -&nbsp; - ...</div></div>
<div class="a" style="left:432px;top:245px;width:33px;height:9px;border:1px solid #000;background:#ffff00"></div>
<div class="a" style="left:451px;top:283px;width:99px;height:14px;background:rgba(28,30,52,.6)"></div>
<div class="a" style="left:449px;top:281px;width:99px;height:13px;background:linear-gradient(180deg,#f2f0e2 0,#f5b8ae 35%,#fa5a4c 70%,#ff0000 100%);overflow:hidden"><div class="t" style="left:0;top:1px;font-size:12px;line-height:12px;transform-origin:0 0;transform:scaleX(0.923)">EQLTPC53/JB/83...</div></div>
<div class="a" style="left:449px;top:272px;width:67px;height:9px;border:1px solid #000;background:#ff0000"></div>
</div>
<div class="a" style="left:366px;top:443px;width:638px;height:212px;overflow:hidden">
<div class="a" style="left:349px;top:13px;width:252px;height:14px;background:rgba(28,30,52,.6)"></div>
<div class="a" style="left:347px;top:11px;width:252px;height:13px;background:linear-gradient(180deg,#f2f0e2 0,#f6f3b0 35%,#fafa50 70%,#ffff00 100%);overflow:hidden"><div class="t" style="left:0;top:1px;font-size:12px;line-height:12px;transform-origin:0 0;transform:scaleX(0.938)">EQLTPC22/JB/46 -&nbsp; - 17/03/2007 to 17/03/2007 ...</div></div>
<div class="a" style="left:347px;top:2px;width:16px;height:9px;border:1px solid #000;background:#ffff00"></div>
<div class="a" style="left:213px;top:40px;width:270px;height:14px;background:rgba(28,30,52,.6)"></div>
<div class="a" style="left:211px;top:38px;width:270px;height:13px;background:linear-gradient(180deg,#f2f0e2 0,#f5b8ae 35%,#fa5a4c 70%,#ff0000 100%);overflow:hidden"><div class="t" style="left:0;top:1px;font-size:12px;line-height:12px;transform-origin:0 0;transform:scaleX(0.940)">EQLTPC33/JB/58 -&nbsp; - 09/03/2007 to 12/03/2007</div></div>
<div class="a" style="left:211px;top:29px;width:67px;height:9px;border:1px solid #000;background:#ff0000"></div>
<div class="a" style="left:536px;top:40px;width:65px;height:14px;background:rgba(28,30,52,.6)"></div>
<div class="a" style="left:534px;top:38px;width:65px;height:13px;background:linear-gradient(180deg,#f2f0e2 0,#f6f3b0 35%,#fafa50 70%,#ffff00 100%);overflow:hidden"><div class="t" style="left:0;top:1px;font-size:12px;line-height:12px;transform-origin:0 0;transform:scaleX(0.887)">EQLTPC55...</div></div>
<div class="a" style="left:534px;top:29px;width:67px;height:9px;border:1px solid #000;background:#ffff00"></div>
<svg style="left:596px;top:31px" width="4" height="6" viewBox="0 0 4 6"><path d="M0 0 L4 3 L0 6 Z" fill="#000"/></svg>
<div class="a" style="left:213px;top:67px;width:272px;height:14px;background:rgba(28,30,52,.6)"></div>
<div class="a" style="left:211px;top:65px;width:272px;height:13px;background:linear-gradient(180deg,#f2f0e2 0,#f5b8ae 35%,#fa5a4c 70%,#ff0000 100%);overflow:hidden"><div class="t" style="left:0;top:1px;font-size:12px;line-height:12px;transform-origin:0 0;transform:scaleX(0.940)">SUBTPC33/JB/96 -&nbsp; - 09/03/2007 to 12/03/2007</div></div>
<div class="a" style="left:211px;top:56px;width:67px;height:9px;border:1px solid #000;background:#ff0000"></div>
<div class="a" style="left:570px;top:67px;width:31px;height:14px;background:rgba(28,30,52,.6)"></div>
<div class="a" style="left:568px;top:65px;width:31px;height:13px;background:linear-gradient(180deg,#f2f0e2 0,#f6f3b0 35%,#fafa50 70%,#ffff00 100%);overflow:hidden"><div class="t" style="left:0;top:1px;font-size:12px;line-height:12px;transform-origin:0 0;transform:scaleX(0.838)">EQL...</div></div>
<div class="a" style="left:568px;top:56px;width:16px;height:9px;border:1px solid #000;background:#ffff00"></div>
<div class="a" style="left:111px;top:94px;width:321px;height:14px;background:rgba(28,30,52,.6)"></div>
<div class="a" style="left:109px;top:92px;width:321px;height:13px;background:linear-gradient(180deg,#f2f0e2 0,#f5b8ae 35%,#fa5a4c 70%,#ff0000 100%);overflow:hidden"><div class="t" style="left:0;top:1px;font-size:12px;line-height:12px;transform-origin:0 0;transform:scaleX(0.940)">EQLTPC45/JB/72 -&nbsp; - 03/03/2007 to 03/03/2007 23:59:00</div></div>
<div class="a" style="left:109px;top:83px;width:16px;height:9px;border:1px solid #000;background:#ff0000"></div>
<div class="a" style="left:570px;top:94px;width:31px;height:14px;background:rgba(28,30,52,.6)"></div>
<div class="a" style="left:568px;top:92px;width:31px;height:13px;background:linear-gradient(180deg,#f2f0e2 0,#f6f3b0 35%,#fafa50 70%,#ffff00 100%);overflow:hidden"><div class="t" style="left:0;top:1px;font-size:12px;line-height:12px;transform-origin:0 0;transform:scaleX(0.838)">EQL...</div></div>
<div class="a" style="left:568px;top:83px;width:16px;height:9px;border:1px solid #000;background:#ffff00"></div>
<div class="a" style="left:93px;top:121px;width:270px;height:14px;background:rgba(28,30,52,.6)"></div>
<div class="a" style="left:91px;top:119px;width:270px;height:13px;background:linear-gradient(180deg,#f2f0e2 0,#f6f3b0 35%,#fafa50 70%,#ffff00 100%);overflow:hidden"><div class="t" style="left:0;top:1px;font-size:12px;line-height:12px;transform-origin:0 0;transform:scaleX(0.940)">EQLTPC49/JB/80 -&nbsp; - 02/03/2007 to 06/03/2007</div></div>
<div class="a" style="left:91px;top:110px;width:85px;height:9px;border:1px solid #000;background:#ffff00"></div>
<div class="a" style="left:570px;top:121px;width:31px;height:14px;background:rgba(28,30,52,.6)"></div>
<div class="a" style="left:568px;top:119px;width:31px;height:13px;background:linear-gradient(180deg,#f2f0e2 0,#f6f3b0 35%,#fafa50 70%,#ffff00 100%);overflow:hidden"><div class="t" style="left:0;top:1px;font-size:12px;line-height:12px;transform-origin:0 0;transform:scaleX(0.838)">EQL...</div></div>
<div class="a" style="left:568px;top:110px;width:16px;height:9px;border:1px solid #000;background:#ffff00"></div>
<div class="a" style="left:264px;top:148px;width:321px;height:14px;background:rgba(28,30,52,.6)"></div>
<div class="a" style="left:262px;top:146px;width:321px;height:13px;background:linear-gradient(180deg,#f2f0e2 0,#f6f3b0 35%,#fafa50 70%,#ffff00 100%);overflow:hidden"><div class="t" style="left:0;top:1px;font-size:12px;line-height:12px;transform-origin:0 0;transform:scaleX(0.940)">EQLTPC56/JB/86 -&nbsp; - 12/03/2007 to 12/03/2007 23:59:00</div></div>
<div class="a" style="left:262px;top:137px;width:16px;height:9px;border:1px solid #000;background:#ffff00"></div>
<div class="a" style="left:93px;top:175px;width:389px;height:14px;background:rgba(28,30,52,.6)"></div>
<div class="a" style="left:91px;top:173px;width:389px;height:13px;background:linear-gradient(180deg,#f2f0e2 0,#f5b8ae 35%,#fa5a4c 70%,#ff0000 100%);overflow:hidden"><div class="t" style="left:0;top:1px;font-size:12px;line-height:12px;transform-origin:0 0;transform:scaleX(0.920)">EQLTPC59/JB/89 - Energy Events Forum - 02/03/2007 to 07/03/2007</div></div>
<div class="a" style="left:91px;top:164px;width:102px;height:9px;border:1px solid #000;background:#ff0000"></div>
<div class="a" style="left:570px;top:175px;width:31px;height:14px;background:rgba(28,30,52,.6)"></div>
<div class="a" style="left:568px;top:173px;width:31px;height:13px;background:linear-gradient(180deg,#f2f0e2 0,#f6f3b0 35%,#fafa50 70%,#ffff00 100%);overflow:hidden"><div class="t" style="left:0;top:1px;font-size:12px;line-height:12px;transform-origin:0 0;transform:scaleX(0.838)">EQL...</div></div>
<div class="a" style="left:568px;top:164px;width:16px;height:9px;border:1px solid #000;background:#ffff00"></div>
<div class="a" style="left:93px;top:202px;width:272px;height:14px;background:rgba(28,30,52,.6)"></div>
<div class="a" style="left:91px;top:200px;width:272px;height:13px;background:linear-gradient(180deg,#f2f0e2 0,#f5b8ae 35%,#fa5a4c 70%,#ff0000 100%);overflow:hidden"><div class="t" style="left:0;top:1px;font-size:12px;line-height:12px;transform-origin:0 0;transform:scaleX(0.940)">SUBTPC59/JB/95 -&nbsp; - 02/03/2007 to 07/03/2007</div></div>
<div class="a" style="left:91px;top:191px;width:102px;height:9px;border:1px solid #000;background:#ff0000"></div>
</div>
<div class="a" style="left:438px;top:136px;width:479px;height:1px;background:#000080"></div>
<div class="a" style="left:438px;top:136px;width:1px;height:308px;background:#000080"></div>
<div class="a" style="left:916px;top:136px;width:1px;height:308px;background:#000080"></div>
<div class="a" style="left:438px;top:443px;width:530px;height:1px;background:#000080"></div>
<div class="a" style="left:438px;top:443px;width:1px;height:212px;background:#000080"></div>
<div class="a" style="left:967px;top:443px;width:1px;height:212px;background:#000080"></div>
<div class="a" style="left:438px;top:654px;width:530px;height:1px;background:#000080"></div>
<div class="a" style="left:269px;top:115px;width:5px;height:619px;background:#d6e3f6"></div>
<div class="a" style="left:269px;top:115px;width:1px;height:616px;background:#9aa0b0"></div>
<div class="a" style="left:270px;top:115px;width:1px;height:616px;background:#ffff00"></div>
<div class="a" style="left:271px;top:115px;width:1px;height:616px;background:#8a8a70"></div>
<div class="a" style="left:272px;top:115px;width:1px;height:616px;background:#ffff00"></div>
<div class="a" style="left:273px;top:115px;width:1px;height:616px;background:#fff"></div>
<div class="a" style="left:1003px;top:117px;width:17px;height:538px;background:linear-gradient(90deg,#f3f1e8 0,#fdfdfa 40%,#fbfbf7 70%,#eeede5 100%)"></div>
<div class="a" style="left:1004px;top:119px;width:15px;height:15px;border:1px solid #fff;border-radius:2px;background:linear-gradient(135deg,#cddcfb 0,#bcd0f8 60%,#b0c6f4 100%);box-shadow:0 1px 0 #b9c9e6"></div>
<svg style="left:1011.5px;top:126.5px" width="1" height="1"><path d="M-4 2 L0 -2 L4 2" stroke="#4d6185" stroke-width="2" fill="none"/></svg>
<div class="a" style="left:1004px;top:136px;width:15px;height:16px;border:1px solid #fff;border-radius:2px;background:linear-gradient(135deg,#cddcfb 0,#bcd0f8 60%,#b0c6f4 100%)"></div>
<div class="a" style="left:1008px;top:140px;width:7px;height:1px;background:#8fadec"></div>
<div class="a" style="left:1008px;top:142px;width:7px;height:1px;background:#8fadec"></div>
<div class="a" style="left:1008px;top:144px;width:7px;height:1px;background:#8fadec"></div>
<div class="a" style="left:1008px;top:146px;width:7px;height:1px;background:#8fadec"></div>
<div class="a" style="left:1004px;top:639px;width:15px;height:15px;border:1px solid #fff;border-radius:2px;background:linear-gradient(135deg,#cddcfb 0,#bcd0f8 60%,#b0c6f4 100%);box-shadow:0 1px 0 #b9c9e6"></div>
<svg style="left:1011.5px;top:646.5px" width="1" height="1"><path d="M-4 -2 L0 2 L4 -2" stroke="#4d6185" stroke-width="2" fill="none"/></svg>
<div class="a" style="left:1020px;top:117px;width:3px;height:617px;background:#d6e3f6"></div>
<div class="a" style="left:1021px;top:115px;width:2px;height:619px;background:#fdfcf6"></div>
<div class="a" style="left:1023px;top:115px;width:1px;height:619px;background:#aca899"></div>
<div class="a" style="left:1024px;top:115px;width:1px;height:619px;background:#e4ecf8"></div>
<div class="a" style="left:277px;top:655px;width:726px;height:17px;background:linear-gradient(180deg,#f3f1e8 0,#fdfdfa 40%,#fbfbf7 70%,#eeede5 100%)"></div>
<div class="a" style="left:277px;top:656px;width:15px;height:15px;border:1px solid #fff;border-radius:2px;background:linear-gradient(135deg,#cddcfb 0,#bcd0f8 60%,#b0c6f4 100%);box-shadow:0 1px 0 #b9c9e6"></div>
<svg style="left:284.5px;top:663.5px" width="1" height="1"><path d="M2 -4 L-2 0 L2 4" stroke="#4d6185" stroke-width="2" fill="none"/></svg>
<div class="a" style="left:294px;top:656px;width:256px;height:15px;border:1px solid #fff;border-radius:2px;background:linear-gradient(180deg,#cddcfb 0,#bcd0f8 60%,#b0c6f4 100%)"></div>
<div class="a" style="left:418px;top:660px;width:1px;height:7px;background:#8fadec"></div>
<div class="a" style="left:420px;top:660px;width:1px;height:7px;background:#8fadec"></div>
<div class="a" style="left:422px;top:660px;width:1px;height:7px;background:#8fadec"></div>
<div class="a" style="left:424px;top:660px;width:1px;height:7px;background:#8fadec"></div>
<div class="a" style="left:987px;top:656px;width:15px;height:15px;border:1px solid #fff;border-radius:2px;background:linear-gradient(135deg,#cddcfb 0,#bcd0f8 60%,#b0c6f4 100%);box-shadow:0 1px 0 #b9c9e6"></div>
<svg style="left:994.5px;top:663.5px" width="1" height="1"><path d="M-2 -4 L2 0 L-2 4" stroke="#4d6185" stroke-width="2" fill="none"/></svg>
<div class="a" style="left:1003px;top:655px;width:17px;height:17px;background:#ece9d8"></div>
<div class="a" style="left:277px;top:672px;width:743px;height:37px;background:#d6e3f6"></div>
<div class="a" style="left:286px;top:686px;width:11px;height:11px;border-radius:50%;background:linear-gradient(135deg,#6f6c5c 0,#7a7766 38%,#e8e6d8 62%,#f4f2e6 100%)"></div>
<div class="a" style="left:287.25px;top:687.25px;width:8.5px;height:8.5px;border-radius:50%;background:#fff"></div>
<div class="t" style="left:301px;top:688px;font-size:11px;line-height:11px;">View Jobs</div>
<div class="a" style="left:363px;top:686px;width:11px;height:11px;border-radius:50%;background:linear-gradient(135deg,#6f6c5c 0,#7a7766 38%,#e8e6d8 62%,#f4f2e6 100%)"></div>
<div class="a" style="left:364.25px;top:687.25px;width:8.5px;height:8.5px;border-radius:50%;background:#fff"></div>
<div class="a" style="left:366.5px;top:689.5px;width:4px;height:4px;border-radius:50%;background:#000;box-shadow:0 0 0 .5px #222"></div>
<div class="t" style="left:378px;top:688px;font-size:11px;line-height:11px;">View Eqlists</div>
<div class="a" style="left:448px;top:677px;width:1px;height:28px;background:#aca899"></div>
<div class="a" style="left:449px;top:677px;width:1px;height:28px;background:#fff"></div>
<div class="t" style="left:455px;top:688px;font-size:11px;line-height:11px;letter-spacing:-0.25px">Show Captions</div>
<div class="a" style="left:533px;top:687px;width:13px;height:13px;background:#fff;border-top:2px solid #7b7866;border-left:2px solid #7b7866;border-right:2px solid #f1efe2;border-bottom:2px solid #f1efe2"></div>
<svg style="left:533px;top:687px" width="13" height="13" viewBox="0 0 13 13"><path d="M4 5.5 L6 8.3 L9.5 3.5" stroke="#000" stroke-width="2" fill="none" stroke-linecap="square"/></svg>
<div class="a" style="left:556px;top:687px;width:11px;height:11px;border-radius:50%;background:linear-gradient(135deg,#6f6c5c 0,#7a7766 38%,#e8e6d8 62%,#f4f2e6 100%)"></div>
<div class="a" style="left:557.25px;top:688.25px;width:8.5px;height:8.5px;border-radius:50%;background:#fff"></div>
<div class="t" style="left:571px;top:688px;font-size:11px;line-height:11px;">Inc. Venue</div>
<div class="a" style="left:640px;top:687px;width:11px;height:11px;border-radius:50%;background:linear-gradient(135deg,#6f6c5c 0,#7a7766 38%,#e8e6d8 62%,#f4f2e6 100%)"></div>
<div class="a" style="left:641.25px;top:688.25px;width:8.5px;height:8.5px;border-radius:50%;background:#fff"></div>
<div class="a" style="left:643.5px;top:690.5px;width:4px;height:4px;border-radius:50%;background:#000;box-shadow:0 0 0 .5px #222"></div>
<div class="t" style="left:655px;top:688px;font-size:11px;line-height:11px;">Inc. Title</div>
<div class="a" style="left:653px;top:687px;width:46px;height:15px;border:1px dotted #444"></div>
<div class="a" style="left:731px;top:677px;width:1px;height:28px;background:#aca899"></div>
<div class="a" style="left:732px;top:677px;width:1px;height:28px;background:#fff"></div>
<div class="t" style="left:741px;top:688px;font-size:11px;line-height:11px;letter-spacing:-0.2px">Months to View</div>
<div class="a" style="left:821px;top:681px;width:41px;height:22px;background:#fff;border-top:2px solid #7b7866;border-left:2px solid #7b7866;border-right:2px solid #fff;border-bottom:2px solid #fff"></div>
<div class="t" style="left:824px;top:686px;font-size:11px;line-height:11px;">3</div>
<div class="a" style="left:844px;top:684px;width:16px;height:16px;background:#ece9d8;border-top:1px solid #f4f2e8;border-left:1px solid #f4f2e8;border-right:2px solid #7b7866;border-bottom:2px solid #7b7866"></div>
<div class="a" style="left:845px;top:691px;width:13px;height:1px;background:#c8c6b8"></div>
<div class="a" style="left:845px;top:692px;width:13px;height:1px;background:#fff"></div>
<svg style="left:848px;top:686px" width="9" height="13" viewBox="0 0 9 13"><path d="M0 4.5 L3.5 0.5 L7 4.5 Z M0 7.5 L7 7.5 L3.5 11.5 Z" fill="#000"/></svg>
<div class="a" style="left:277px;top:709px;width:743px;height:22px;background-color:#fff;background-image:linear-gradient(45deg,#d6e3f6 25%,transparent 25%,transparent 75%,#d6e3f6 75%),linear-gradient(45deg,#d6e3f6 25%,transparent 25%,transparent 75%,#d6e3f6 75%);background-size:2px 2px;background-position:0 0,1px 1px"></div>
<div class="a" style="left:277px;top:709px;width:743px;height:1px;background:#000"></div>
<svg style="left:285px;top:709px" width="135" height="16" viewBox="0 0 135 16"><path d="M1 0.5 L5 15.5 L55 15.5 L59 0.5" fill="#ffffe1" stroke="#000" stroke-width="1"/><path d="M59 0.5 L64 15.5 L127 15.5 L132 0.5" fill="#a6c8ef" stroke="#000" stroke-width="1"/></svg>
<div class="a" style="left:345px;top:709px;width:71px;height:1px;background:#a6c8ef"></div>
<div class="t" style="left:291px;top:711px;font-size:11px;line-height:11px;letter-spacing:-0.3px">Jobs View</div>
<div class="t" style="left:348px;top:711px;font-size:11px;line-height:11px;letter-spacing:-0.2px">Planner View</div>
<div class="a" style="left:277px;top:731px;width:746px;height:1px;background:#fdfcf4"></div>
<div class="a" style="left:274px;top:732px;width:750px;height:1px;background:#aca899"></div>
<div class="a" style="left:274px;top:733px;width:751px;height:1px;background:#fff"></div>
<div class="a" style="left:22px;top:712px;width:246px;height:19px;background-color:#fff;background-image:linear-gradient(45deg,#d6e3f6 25%,transparent 25%,transparent 75%,#d6e3f6 75%),linear-gradient(45deg,#d6e3f6 25%,transparent 25%,transparent 75%,#d6e3f6 75%);background-size:2px 2px;background-position:0 0,1px 1px"></div>
<div class="a" style="left:22px;top:711px;width:246px;height:1px;background:#000"></div>
<svg style="left:30px;top:711px" width="205" height="17" viewBox="0 0 205 17"><path d="M1 0.5 L5 16.5 L42 16.5 L47 0.5" fill="#a6c8ef" stroke="#000" stroke-width="1"/><path d="M47 0.5 L49 16.5 L87 16.5 L91 0.5" fill="#ffffe1" stroke="#000" stroke-width="1"/><path d="M91 0.5 L93 16.5 L113 16.5 L116 0.5" fill="#ffffe1" stroke="#000" stroke-width="1"/><path d="M116 0.5 L118 16.5 L147 16.5 L150 0.5" fill="#ffffe1" stroke="#000" stroke-width="1"/><path d="M150 0.5 L153 16.5 L198 16.5 L202 0.5" fill="#ffffe1" stroke="#000" stroke-width="1"/></svg>
<div class="a" style="left:32px;top:711px;width:44px;height:1px;background:#a6c8ef"></div>
<div class="t" style="left:37px;top:715px;font-size:11px;line-height:11px;letter-spacing:-0.15px">Search</div>
<div class="t" style="left:80px;top:715px;font-size:11px;line-height:11px;letter-spacing:-0.15px">Recent</div>
<div class="t" style="left:124px;top:715px;font-size:11px;line-height:11px;letter-spacing:-0.15px">Out</div>
<div class="t" style="left:150px;top:715px;font-size:11px;line-height:11px;letter-spacing:-0.15px">Back</div>
<div class="t" style="left:184px;top:715px;font-size:11px;line-height:11px;letter-spacing:-0.15px">Overdue</div>
<div class="a" style="left:6px;top:731px;width:16px;height:1px;background:#8d8b7e"></div>
<div class="a" style="left:5px;top:732px;width:269px;height:1px;background:#aca899"></div>
<div class="a" style="left:5px;top:733px;width:269px;height:1px;background:#fff"></div>
</body></html>
